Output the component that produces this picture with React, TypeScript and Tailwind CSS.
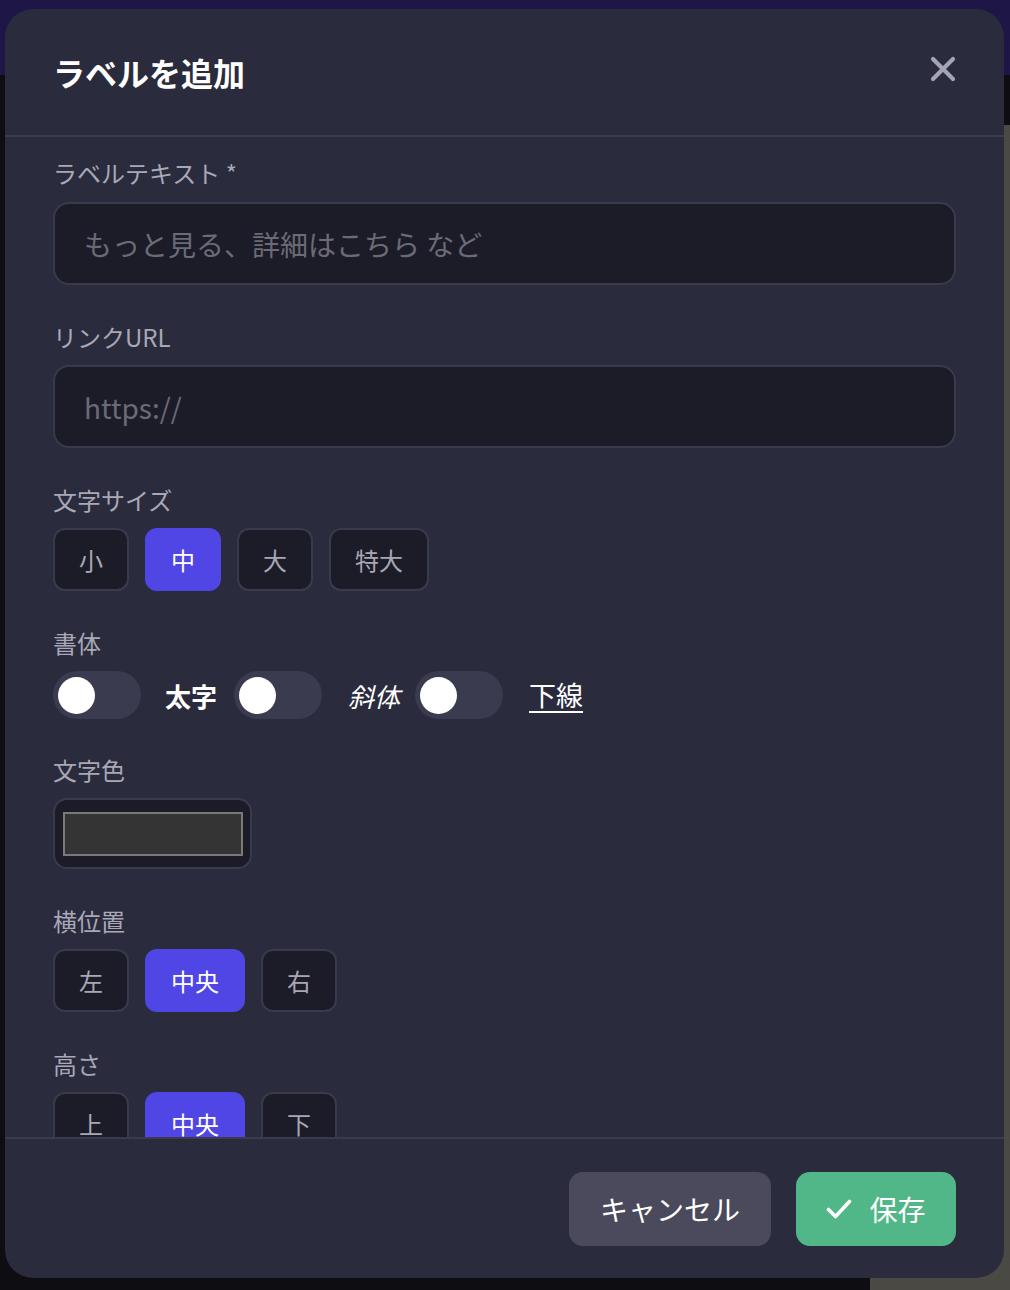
import { useState } from 'react'

const sizes = ['小', '中', '大', '特大']
const hPos = ['左', '中央', '右']
const vPos = ['上', '中央', '下']

function Label({ children }: { children: React.ReactNode }) {
    return <div className="text-[24px] leading-[36px] text-[#a8a8b6] mb-[10px]">{children}</div>
}

function Segment({ items, active }: { items: string[]; active: string }) {
    return (
        <div className="flex gap-4">
            {items.map((it) => (
                <button
                    key={it}
                    className={
                        it === active
                            ? 'h-[63px] px-[24px] rounded-[12px] bg-[#4f46e5] text-white text-[24px] border-2 border-[#4f46e5]'
                            : 'h-[63px] px-[24px] rounded-[12px] bg-[#1c1c29] text-[#a8a8b4] text-[24px] border-2 border-[#383a4d]'
                    }
                >
                    {it}
                </button>
            ))}
        </div>
    )
}

function Toggle() {
    return (
        <div className="w-[88px] h-[48px] rounded-full bg-[#3a3b4f] flex items-center pl-[5px] shrink-0">
            <div className="w-[37px] h-[37px] rounded-full bg-white" />
        </div>
    )
}

export default function App() {
    const [text, setText] = useState('')
    const [url, setUrl] = useState('')

    return (
        <div className="relative w-[1010px] h-[1290px] overflow-hidden bg-[#0e0d12] font-['Noto_Sans_CJK_JP','Noto_Sans',sans-serif]">
            {/* page behind the dialog */}
            <div className="h-[75px] bg-[#1d1646]" />
            <div className="flex h-[1215px]">
                <div className="flex-1" />
                <div className="w-[140px] flex flex-col">
                    <div className="h-[50px]" />
                    <div className="flex-1 bg-[#4b4944]" />
                </div>
            </div>

            {/* dialog */}
            <div className="absolute left-[5px] top-[9px] w-[999px] h-[1269px] rounded-[28px] bg-[#2a2b3d] flex flex-col overflow-hidden">
                <div className="h-[128px] shrink-0 flex items-center justify-between px-12 border-b-2 border-[#3a3b4e]">
                    <h1 className="text-[32px] font-bold text-white">ラベルを追加</h1>
                    <button className="w-[30px] h-[30px] flex items-center justify-center mr-[-2px] mt-[-6px]">
                        <svg width="26" height="26" viewBox="0 0 26 26" fill="none" stroke="#a4a4b6" strokeWidth="4.2" strokeLinecap="round">
                            <path d="M3 3 23 23M23 3 3 23" />
                        </svg>
                    </button>
                </div>

                <div className="flex-1 overflow-hidden px-12 pt-[18px] flex flex-col gap-[34px]">
                    <div>
                        <Label>ラベルテキスト *</Label>
                        <input
                            value={text}
                            onChange={(e) => setText(e.target.value)}
                            placeholder="もっと見る、詳細はこちら など"
                            className="w-full h-[83px] mt-[1px] rounded-[16px] bg-[#1c1c29] border-2 border-[#383a4d] px-[29px] text-[28px] text-white placeholder:text-[#6b6b75] outline-none"
                        />
                    </div>
                    <div>
                        <Label>リンクURL</Label>
                        <input
                            value={url}
                            onChange={(e) => setUrl(e.target.value)}
                            placeholder="https://"
                            className="w-full h-[83px] rounded-[16px] bg-[#1c1c29] border-2 border-[#383a4d] px-[29px] text-[28px] text-white placeholder:text-[#6b6b75] outline-none"
                        />
                    </div>
                    <div>
                        <Label>文字サイズ</Label>
                        <Segment items={sizes} active="中" />
                    </div>
                    <div>
                        <Label>書体</Label>
                        <div className="flex items-center">
                            <Toggle />
                            <span className="ml-6 mr-[17px] text-[26px] font-bold text-white">太字</span>
                            <Toggle />
                            <span className="ml-[26px] mr-[15px] text-[26px] italic text-white">斜体</span>
                            <Toggle />
                            <span className="ml-[26px] text-[27px] text-white underline underline-offset-[5px]">下線</span>
                        </div>
                    </div>
                    <div className="-mt-[1px]">
                        <Label>文字色</Label>
                        <div className="w-[199px] h-[71px] rounded-[14px] bg-[#1c1c29] border-2 border-[#383a4d] flex items-center justify-center">
                            <div className="w-[180px] h-[44px] bg-[#343434] border-2 border-[#7a7a7a]" />
                        </div>
                    </div>
                    <div>
                        <Label>横位置</Label>
                        <Segment items={hPos} active="中央" />
                    </div>
                    <div>
                        <Label>高さ</Label>
                        <Segment items={vPos} active="中央" />
                    </div>
                </div>

                <div className="shrink-0 border-t-2 border-[#3a3b4e] px-12 pt-[33px] pb-[32px] flex justify-end gap-[25px]">
                    <button className="h-[74px] w-[202px] rounded-[14px] bg-[#4a4a5c] text-white text-[28px]">キャンセル</button>
                    <button className="h-[74px] w-[160px] rounded-[14px] bg-[#52b788] text-white text-[28px] flex items-center justify-center gap-[17px]">
                        <svg width="26" height="20" viewBox="0 0 26 20" fill="none" stroke="white" strokeWidth="3.6" strokeLinecap="round" strokeLinejoin="round">
                            <path d="M2.5 10.5 9.5 17.5 23.5 2.5" />
                        </svg>
                        保存
                    </button>
                </div>
            </div>
        </div>
    )
}
